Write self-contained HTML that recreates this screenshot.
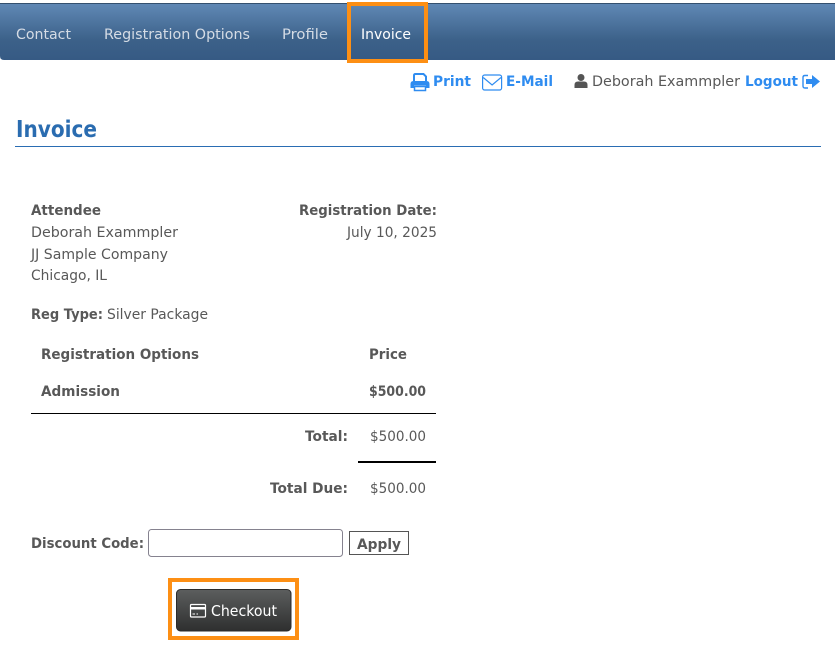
<!DOCTYPE html>
<html><head><meta charset="utf-8"><title>Invoice</title>
<style>
html,body{margin:0;padding:0;background:#fff;width:835px;height:666px;overflow:hidden}
svg{display:block}
text{font-family:"DejaVu Sans","Liberation Sans",sans-serif;font-size:14.6px;fill:#585858}
.b{font-weight:bold}
.n{fill:#d5dce5}
.l{fill:#2f8cf0;font-weight:bold}
</style></head><body>
<svg width="835" height="666" viewBox="0 0 835 666" xmlns="http://www.w3.org/2000/svg">
<defs>
<linearGradient id="nav" x1="0" y1="0" x2="0" y2="1"><stop offset="0" stop-color="#6189b6"/><stop offset=".65" stop-color="#3c6189"/><stop offset="1" stop-color="#365a84"/></linearGradient>
<linearGradient id="btn" x1="0" y1="0" x2="0" y2="1"><stop offset="0" stop-color="#5c5e5e"/><stop offset="1" stop-color="#2e2f2f"/></linearGradient>
</defs>
<path d="M0 3H835V60H4Q0 60 0 56Z" fill="url(#nav)"/>
<path d="M0 3.500H835" stroke="#34506f" stroke-width="1"/>
<text class="n" x="16" y="39" textLength="55" lengthAdjust="spacingAndGlyphs">Contact</text>
<text class="n" x="104" y="39" textLength="146" lengthAdjust="spacingAndGlyphs">Registration Options</text>
<text class="n" x="282" y="39" textLength="46" lengthAdjust="spacingAndGlyphs">Profile</text>
<text x="361" y="39" textLength="50" lengthAdjust="spacingAndGlyphs" style="fill:#fff">Invoice</text>
<rect x="349" y="4" width="77" height="57" fill="none" stroke="#fd8f14" stroke-width="4"/>

<path d="M414 81V75.500Q414 74 415.500 74H423.500L426 76.500V81" fill="none" stroke="#2f8cf0" stroke-width="2"/>
<path d="M410.500 84Q410.500 81 413.500 81H426.500Q429.500 81 429.500 84V88H426V85.500H414V88H410.500Z" fill="#2f8cf0"/>
<rect x="414.500" y="86.500" width="11" height="4" fill="#fff" stroke="#2f8cf0" stroke-width="1.500"/>
<text class="l" x="433" y="86" textLength="38" lengthAdjust="spacingAndGlyphs">Print</text>
<rect x="482.600" y="75" width="19" height="15" rx="2" fill="none" stroke="#2f8cf0" stroke-width="1.200"/>
<path d="M483.200 77.500L492.100 85L501 77.500" fill="none" stroke="#2f8cf0" stroke-width="1.200"/>
<text class="l" x="506" y="86" textLength="47" lengthAdjust="spacingAndGlyphs">E-Mail</text>
<circle cx="581" cy="77.500" r="3.500" fill="#555"/>
<path d="M574.500 88V85Q574.500 81.500 578 81.500H584Q587.500 81.500 587.500 85V88Z" fill="#555"/>
<text x="592" y="86" textLength="148" lengthAdjust="spacingAndGlyphs">Deborah Exammpler</text>
<text class="l" x="745" y="86" textLength="53" lengthAdjust="spacingAndGlyphs">Logout</text>
<path d="M808 75.500H805Q803 75.500 803 77.500V86Q803 88 805 88H808" fill="none" stroke="#2f8cf0" stroke-width="1.400"/>
<path d="M806 79H812V75L820 81.500L812 88V84H806Z" fill="#2f8cf0"/>

<text class="b" x="16" y="137" textLength="81" lengthAdjust="spacingAndGlyphs" style="font-size:23px;fill:#2a6cb0">Invoice</text>
<rect x="15" y="146" width="806" height="1" fill="#2a6db3"/>

<text class="b" x="31" y="215" textLength="70" lengthAdjust="spacingAndGlyphs">Attendee</text>
<text x="31" y="237" textLength="147" lengthAdjust="spacingAndGlyphs">Deborah Exammpler</text>
<text x="31" y="259" textLength="137" lengthAdjust="spacingAndGlyphs">JJ Sample Company</text>
<text x="31" y="280" textLength="76" lengthAdjust="spacingAndGlyphs">Chicago, IL</text>
<text class="b" x="299" y="215" textLength="138" lengthAdjust="spacingAndGlyphs">Registration Date:</text>
<text x="347" y="237" textLength="90" lengthAdjust="spacingAndGlyphs">July 10, 2025</text>
<text class="b" x="31" y="319" textLength="72" lengthAdjust="spacingAndGlyphs">Reg Type:</text>
<text x="107" y="319" textLength="101" lengthAdjust="spacingAndGlyphs">Silver Package</text>

<text class="b" x="41" y="359" textLength="158" lengthAdjust="spacingAndGlyphs">Registration Options</text>
<text class="b" x="369" y="359" textLength="38" lengthAdjust="spacingAndGlyphs">Price</text>
<text class="b" x="41" y="396" textLength="79" lengthAdjust="spacingAndGlyphs">Admission</text>
<text class="b" x="369" y="396" textLength="57" lengthAdjust="spacingAndGlyphs">$500.00</text>
<rect x="31" y="413" width="405" height="1" fill="#000"/>
<text class="b" x="305" y="441" textLength="43" lengthAdjust="spacingAndGlyphs">Total:</text>
<text x="370" y="441" textLength="56" lengthAdjust="spacingAndGlyphs">$500.00</text>
<rect x="358" y="461" width="78" height="2" fill="#000"/>
<text class="b" x="270" y="493" textLength="78" lengthAdjust="spacingAndGlyphs">Total Due:</text>
<text x="370" y="493" textLength="56" lengthAdjust="spacingAndGlyphs">$500.00</text>

<text class="b" x="31" y="548" textLength="113" lengthAdjust="spacingAndGlyphs">Discount Code:</text>
<rect x="148.500" y="529.500" width="194" height="27" rx="3" fill="#fff" stroke="#85828f"/>
<rect x="349.500" y="531.500" width="59" height="23" fill="#fff" stroke="#555"/>
<text class="b" x="357" y="549" textLength="44" lengthAdjust="spacingAndGlyphs">Apply</text>

<rect x="170" y="580" width="127" height="58" fill="none" stroke="#fd8f14" stroke-width="4"/>
<rect x="176.500" y="589.500" width="114.500" height="41.500" rx="4" fill="url(#btn)" stroke="#2b2b2b"/>
<rect x="190.500" y="604.500" width="15" height="12.500" rx="1" fill="none" stroke="#fff" stroke-width="1.200"/>
<rect x="190.500" y="607" width="15" height="2.500" fill="#fff"/>
<path d="M192.500 614H195M196.500 614H198" stroke="#fff" stroke-width="1"/>
<text x="211" y="616" textLength="66" lengthAdjust="spacingAndGlyphs" style="fill:#fff;font-size:15.500px">Checkout</text>
</svg>
</body></html>
